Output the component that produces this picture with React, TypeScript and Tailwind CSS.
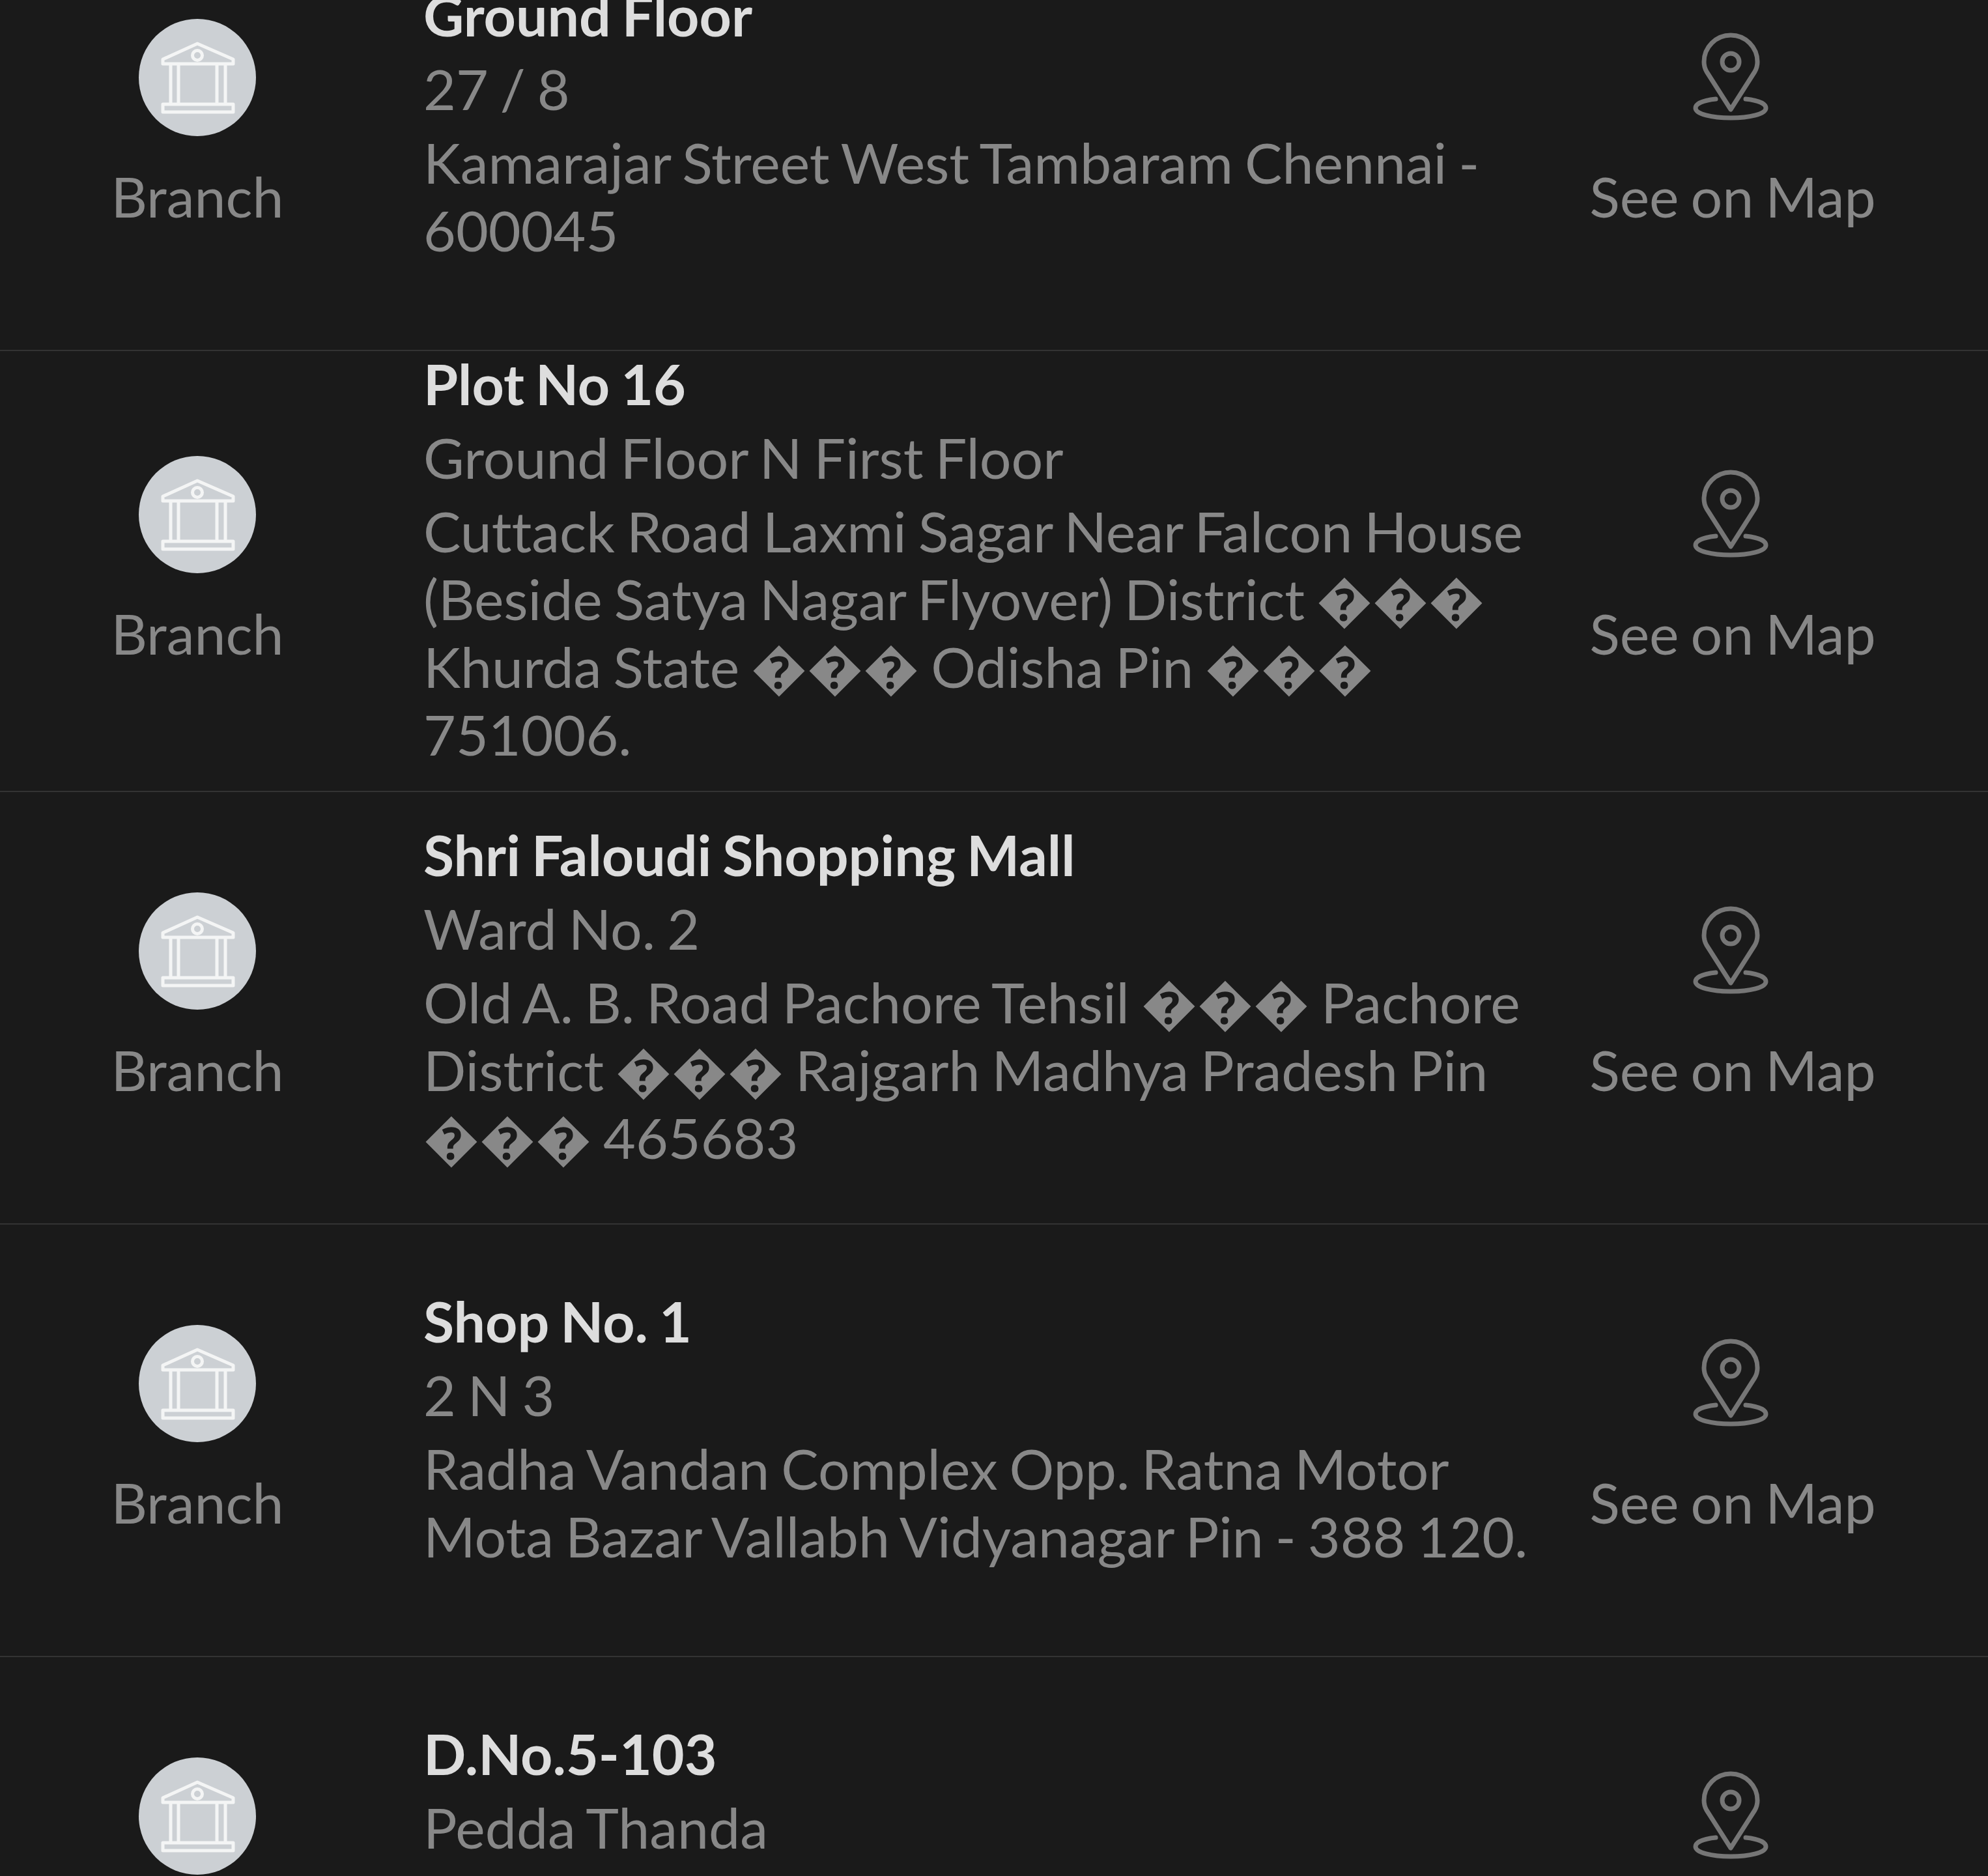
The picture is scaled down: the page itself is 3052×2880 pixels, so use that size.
const rows = [
  { title: "Ground Floor", sub: "27 / 8", addr: "Kamarajar Street West Tambaram Chennai - 600045" },
  { title: "Plot No 16", sub: "Ground Floor N First Floor", addr: "Cuttack Road Laxmi Sagar Near Falcon House (Beside Satya Nagar Flyover) District \uFFFD\uFFFD\uFFFD Khurda State \uFFFD\uFFFD\uFFFD Odisha Pin \uFFFD\uFFFD\uFFFD 751006." },
  { title: "Shri Faloudi Shopping Mall", sub: "Ward No. 2", addr: "Old A. B. Road Pachore Tehsil \uFFFD\uFFFD\uFFFD Pachore District \uFFFD\uFFFD\uFFFD Rajgarh Madhya Pradesh Pin \uFFFD\uFFFD\uFFFD 465683" },
  { title: "Shop No. 1", sub: "2 N 3", addr: "Radha Vandan Complex Opp. Ratna Motor Mota Bazar Vallabh Vidyanagar Pin - 388 120." },
  { title: "D.No.5-103", sub: "Pedda Thanda", addr: "Khammam Road Khammam Telangana - 507001" },
];

function BankIcon() {
  return (
    <div className="flex h-[180px] w-[180px] items-center justify-center rounded-full bg-[#ccd0d4]">
      <svg width="180" height="180" viewBox="0 0 180 180" fill="none" stroke="#f4f5f5" strokeWidth="5" strokeLinejoin="round">
        <path d="M37 69 V62 L90 38 L145 62 V69 Z" />
        <circle cx="90" cy="56" r="7.5" />
        <path d="M49 69 V131 M61 69 V131 M120 69 V131 M133 69 V131" />
        <rect x="37" y="131" width="108" height="12" />
      </svg>
    </div>
  );
}

function PinIcon() {
  return (
    <svg width="180" height="180" viewBox="0 0 180 180" fill="none" stroke="#767676" strokeWidth="7" strokeLinejoin="round" strokeLinecap="round">
      <path d="M87 136 L50 78 C46 71 46 66 46 63 A41 41 0 0 1 128 63 C128 66 128 71 124 78 Z" />
      <circle cx="87" cy="63" r="13" />
      <path d="M64 120 C45 122 33 127 33 134 C33 143 58 149 87 149 C116 149 141 143 141 134 C141 127 129 122 110 120" />
    </svg>
  );
}

export default function App() {
  return (
    <div className="h-[2880px] w-[3052px] overflow-hidden bg-[#1a1a1a] font-['Lato','Liberation_Sans',sans-serif] text-[86px] leading-[104px] text-[#888888] [font-variant-ligatures:none] [word-spacing:-4px]">
      <div className="-mt-[125px]">
        {rows.map((r) => (
          <div key={r.title} className="grid min-h-[664px] grid-cols-[606px_1740px_452px] items-center gap-x-[44px] border-b-2 border-[#333333]">
            <div className="flex flex-col items-center gap-[40px] pb-[30px]">
              <BankIcon />
              <span>Branch</span>
            </div>
            <div className="-mt-[2px] mb-[35px] flex flex-col gap-[9px]">
              <div className="font-bold text-[#dddddd]">{r.title}</div>
              <div>{r.sub}</div>
              <div>{r.addr}</div>
            </div>
            <div className="flex flex-col items-center gap-[37px] pb-[27px]">
              <PinIcon />
              <span className="whitespace-nowrap">See on Map</span>
            </div>
          </div>
        ))}
      </div>
    </div>
  );
}
